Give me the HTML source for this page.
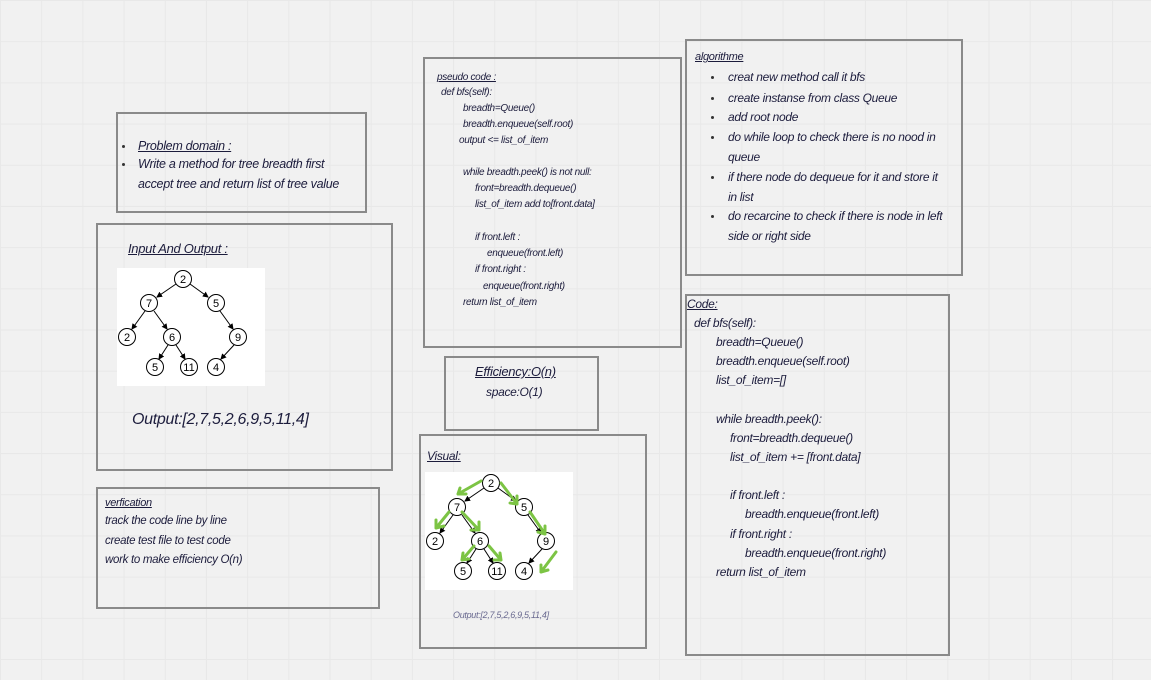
<!DOCTYPE html>
<html><head><meta charset="utf-8"><style>
body{margin:0;width:1151px;height:680px;overflow:hidden;position:relative;background-color:#f1f1f1;
background-image:linear-gradient(#e8e8e8 1px,transparent 1px),linear-gradient(90deg,#e8e8e8 1px,transparent 1px);
background-size:41.2px 41.2px;background-position:0 0;font-family:"Liberation Sans",sans-serif;font-style:italic;color:#1c1c3c}
.b{position:absolute;border:2px solid #8a8a8a;box-sizing:border-box}
.t{position:absolute;white-space:nowrap;line-height:16px;font-size:11px;letter-spacing:-0.3px}
.u{text-decoration:underline}
.d{position:absolute;width:3px;height:3px;border-radius:50%;background:#333}
svg{position:absolute;left:0;top:0;font-style:normal}
</style></head><body>
<div class="b" style="left:116px;top:112px;width:251px;height:101px"></div>
<div class="b" style="left:96px;top:223px;width:297px;height:248px"></div>
<div class="b" style="left:96px;top:487px;width:284px;height:122px"></div>
<div class="b" style="left:423px;top:57px;width:259px;height:291px"></div>
<div class="b" style="left:444px;top:356px;width:155px;height:75px"></div>
<div class="b" style="left:419px;top:434px;width:228px;height:215px"></div>
<div class="b" style="left:685px;top:39px;width:278px;height:237px"></div>
<div class="b" style="left:685px;top:294px;width:265px;height:362px"></div>

<div class="d" style="left:122px;top:145px"></div><div class="d" style="left:122px;top:163px"></div>
<div class="t u" style="left:138px;top:138px;font-size:12.5px">Problem domain :</div>
<div class="t" style="left:138px;top:156px;font-size:12.5px">Write a method for tree breadth first</div>
<div class="t" style="left:138px;top:176px;font-size:12.5px">accept tree and return list of tree value</div>

<div class="t u" style="left:128px;top:241px;font-size:13px">Input And Output :</div>
<div class="t" style="left:132px;top:410px;font-size:16px;line-height:20px">Output:[2,7,5,2,6,9,5,11,4]</div>

<div class="t u" style="left:105px;top:495px">verfication</div>
<div class="t" style="left:105px;top:513px;font-size:11.5px">track the code line by line</div>
<div class="t" style="left:105px;top:533px;font-size:11.5px">create test file to test code</div>
<div class="t" style="left:105px;top:552px;font-size:11.5px">work to make efficiency O(n)</div>

<div>
<div class="t u" style="left:437px;top:70px;font-size:10px">pseudo code :</div>
<div class="t" style="left:441px;top:85px;font-size:10px">def bfs(self):</div>
<div class="t" style="left:463px;top:101px;font-size:10px">breadth=Queue()</div>
<div class="t" style="left:463px;top:117px;font-size:10px">breadth.enqueue(self.root)</div>
<div class="t" style="left:459px;top:133px;font-size:10px">output &lt;= list_of_item</div>
<div class="t" style="left:463px;top:165px;font-size:10px">while breadth.peek() is not null:</div>
<div class="t" style="left:475px;top:181px;font-size:10px">front=breadth.dequeue()</div>
<div class="t" style="left:475px;top:197px;font-size:10px">list_of_item add to[front.data]</div>
<div class="t" style="left:475px;top:230px;font-size:10px">if front.left :</div>
<div class="t" style="left:487px;top:246px;font-size:10px">enqueue(front.left)</div>
<div class="t" style="left:475px;top:262px;font-size:10px">if front.right :</div>
<div class="t" style="left:483px;top:279px;font-size:10px">enqueue(front.right)</div>
<div class="t" style="left:463px;top:295px;font-size:10px">return list_of_item</div>
</div>

<div class="t u" style="left:475px;top:364px;font-size:13px">Efficiency:O(n)</div>
<div class="t" style="left:486px;top:384px;font-size:12px">space:O(1)</div>

<div class="t u" style="left:427px;top:448px;font-size:12px">Visual:</div>
<div class="t" style="left:453px;top:607px;font-size:9px;color:#6a6a90">Output:[2,7,5,2,6,9,5,11,4]</div>

<div class="t u" style="left:695px;top:49px">algorithme</div>
<div class="d" style="left:711px;top:76px"></div><div class="d" style="left:711px;top:97px"></div>
<div class="d" style="left:711px;top:116px"></div><div class="d" style="left:711px;top:136px"></div>
<div class="d" style="left:711px;top:176px"></div><div class="d" style="left:711px;top:215px"></div>
<div class="t" style="left:728px;top:69px;font-size:12px">creat new method call it  bfs</div>
<div class="t" style="left:728px;top:90px;font-size:12px">create instanse from class Queue</div>
<div class="t" style="left:728px;top:109px;font-size:12px">add root node</div>
<div class="t" style="left:728px;top:129px;font-size:12px">do while loop to check there is no nood in</div>
<div class="t" style="left:728px;top:149px;font-size:12px">queue</div>
<div class="t" style="left:728px;top:169px;font-size:12px">if there node do dequeue for it and store it</div>
<div class="t" style="left:728px;top:189px;font-size:12px">in list</div>
<div class="t" style="left:728px;top:208px;font-size:12px">do recarcine to check if there is node in left</div>
<div class="t" style="left:728px;top:228px;font-size:12px">side or right side</div>

<div class="t u" style="left:687px;top:296px;font-size:12px">Code:</div>
<div class="t" style="left:694px;top:315px;font-size:12px">def bfs(self):</div>
<div class="t" style="left:716px;top:334px;font-size:12px">breadth=Queue()</div>
<div class="t" style="left:716px;top:353px;font-size:12px">breadth.enqueue(self.root)</div>
<div class="t" style="left:716px;top:372px;font-size:12px">list_of_item=[]</div>
<div class="t" style="left:716px;top:411px;font-size:12px">while breadth.peek():</div>
<div class="t" style="left:730px;top:430px;font-size:12px">front=breadth.dequeue()</div>
<div class="t" style="left:730px;top:449px;font-size:12px">list_of_item += [front.data]</div>
<div class="t" style="left:730px;top:487px;font-size:12px">if front.left :</div>
<div class="t" style="left:745px;top:506px;font-size:12px">breadth.enqueue(front.left)</div>
<div class="t" style="left:730px;top:526px;font-size:12px">if front.right :</div>
<div class="t" style="left:745px;top:545px;font-size:12px">breadth.enqueue(front.right)</div>
<div class="t" style="left:716px;top:564px;font-size:12px">return list_of_item</div>

<svg width="1151" height="680" font-family="Liberation Sans, sans-serif" font-size="11" text-anchor="middle">
<defs>
<marker id="a" markerWidth="6" markerHeight="6" refX="5" refY="3" orient="auto"><path d="M0,0L6,3L0,6z" fill="#000"/></marker>
<g id="tree">
<rect x="117" y="268" width="148" height="118" fill="#fff"/>
<g stroke="#000" stroke-width="1" marker-end="url(#a)">
<line x1="176" y1="284" x2="157" y2="297"/><line x1="190" y1="284" x2="208" y2="297"/>
<line x1="145" y1="311" x2="132" y2="329"/><line x1="154" y1="311" x2="167" y2="329"/>
<line x1="220" y1="311" x2="233" y2="329"/><line x1="168" y1="345" x2="159" y2="359"/>
<line x1="176" y1="345" x2="185" y2="359"/><line x1="234" y1="345" x2="221" y2="359"/>
</g>
<g fill="#fff" stroke="#000" stroke-width="1">
<circle cx="183" cy="279" r="8.5"/><circle cx="149" cy="303" r="8.5"/><circle cx="216" cy="303" r="8.5"/>
<circle cx="127" cy="337" r="8.5"/><circle cx="172" cy="337" r="8.5"/><circle cx="238" cy="337" r="8.5"/>
<circle cx="155" cy="367" r="8.5"/><circle cx="189" cy="367" r="8.5"/><circle cx="216" cy="367" r="8.5"/>
</g>
<g fill="#000">
<text x="183" y="283">2</text><text x="149" y="307">7</text><text x="216" y="307">5</text>
<text x="127" y="341">2</text><text x="172" y="341">6</text><text x="238" y="341">9</text>
<text x="155" y="371">5</text><text x="189" y="371">11</text><text x="216" y="371">4</text>
</g>
</g>
</defs>
<use href="#tree"/>
<g transform="translate(308,204)"><use href="#tree"/></g>
<g fill="none" stroke="#7cc444" stroke-width="3" stroke-linecap="round">
<path d="M481,481L458,494M458,494l8,0M458,494l2,-6"/>
<path d="M501,483L517,504M517,504l0,-8M517,504l-7,-1"/>
<path d="M449,512L436,528M436,528l8,-2M436,528l0,-8"/>
<path d="M462,512L479,530M479,530l0,-8M479,530l-8,0"/>
<path d="M530,512L545,534M545,534l0,-8M545,534l-7,-2"/>
<path d="M474,546L462,560M462,560l7,-1M462,560l1,-7"/>
<path d="M489,546L501,560M501,560l-1,-7M501,560l-7,0"/>
<path d="M556,552L541,572M541,572l7,-2M541,572l0,-7"/>
</g>
</svg>
</body></html>
